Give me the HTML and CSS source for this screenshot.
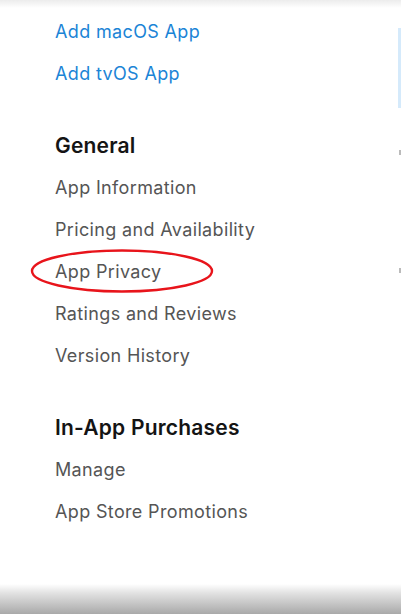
FILE: index.html
```html
<!DOCTYPE html>
<html>
<head>
<meta charset="utf-8">
<link rel="stylesheet" href="styles.css">
</head>
<body>
<div class="page">
  <div class="topshade"></div>
  <div class="layout">
    <nav class="sidebar">
      <ul class="group">
        <li class="link">Add macOS App</li>
        <li class="link">Add tvOS App</li>
      </ul>
      <h2 class="heading">General</h2>
      <ul class="group">
        <li class="item">App Information</li>
        <li class="item">Pricing and Availability</li>
        <li class="item marked">App Privacy
          <svg class="ring" width="184" height="44" viewBox="0 0 184 44"><ellipse cx="92" cy="22" rx="90" ry="20.5" fill="none" stroke="#e8141b" stroke-width="2.4"/></svg>
        </li>
        <li class="item">Ratings and Reviews</li>
        <li class="item">Version History</li>
      </ul>
      <h2 class="heading">In-App Purchases</h2>
      <ul class="group">
        <li class="item">Manage</li>
        <li class="item">App Store Promotions</li>
      </ul>
    </nav>
    <aside class="edge">
      <div class="edge-bar"></div>
      <div class="edge-mark one"></div>
      <div class="edge-mark two"></div>
    </aside>
  </div>
  <div class="bottomshade"></div>
</div>
</body>
</html>
```
FILE: styles.css
```css
html, body {
  margin: 0;
  padding: 0;
  background: #fff;
}
.page {
  height: 614px;
  display: flex;
  flex-direction: column;
  font-family: Inter, "Noto Sans", sans-serif;
  overflow: hidden;
}
.topshade {
  height: 8px;
  flex: none;
  background: linear-gradient(#ececec, #ffffff);
}
.layout {
  flex: 1;
  display: grid;
  grid-template-columns: 1fr 3px;
}
.sidebar {
  padding: 3px 0 0 55px;
}
.group {
  list-style: none;
  margin: 0;
  padding: 0;
}
.group li {
  height: 42px;
  line-height: 42px;
  font-size: 18px;
  letter-spacing: 0.35px;
}
.link {
  color: #1b84d6;
}
.item {
  color: #555555;
}
.heading {
  margin: 30px 0 0;
  height: 42px;
  line-height: 42px;
  font-size: 21px;
  font-weight: 600;
  color: #141414;
  letter-spacing: 0.2px;
}
.marked {
  position: relative;
}
.ring {
  position: absolute;
  left: -25px;
  top: -2px;
}
.edge {
  display: flex;
  flex-direction: column;
}
.edge-bar {
  margin-top: 20px;
  height: 80px;
  background: #d5eafb;
}
.edge-mark {
  width: 2px;
  margin-left: 1px;
  height: 5px;
  background: #bbb;
}
.edge-mark.one {
  margin-top: 42px;
}
.edge-mark.two {
  margin-top: 113px;
}
.bottomshade {
  height: 30px;
  flex: none;
  background: linear-gradient(#ffffff, #e2e2e2 30%, #a9a9a9);
}
```
